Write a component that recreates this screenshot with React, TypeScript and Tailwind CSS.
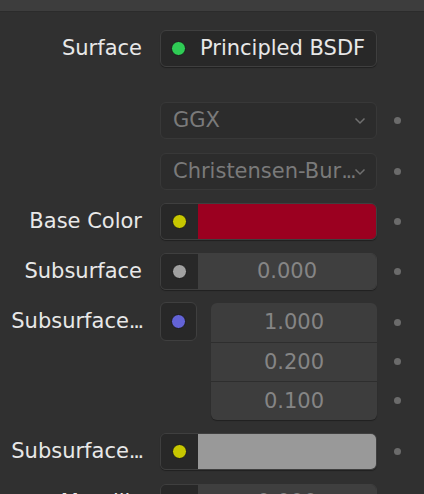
import React from 'react';

const font = { fontFamily: '"DejaVu Sans", "Liberation Sans", sans-serif' };

function Dot() {
  return <div className="ml-[17px] size-[7px] shrink-0 rounded-full bg-[#6b6b6b]" />;
}

function Socket({ color }: { color: string }) {
  return (
    <div className="flex w-[37px] shrink-0 items-center justify-center self-stretch bg-[#282828]">
      <div className={`size-[15px] rounded-full border border-[#1a1a1a] ${color}`} />
    </div>
  );
}

function Label({ text, cut }: { text: string; cut?: boolean }) {
  return (
    <div className="w-[142px] shrink-0 whitespace-nowrap text-right text-[21px] leading-none text-[#e8e8e8]">
      {text}
      {cut && <span className="tracking-[-2.3px]">...</span>}
    </div>
  );
}

function Chevron() {
  return (
    <svg width="12" height="8" viewBox="0 0 12 8" className="ml-auto mr-[2px] shrink-0">
      <path d="M1.5 1.5 L6 6 L10.5 1.5" fill="none" stroke="#707070" strokeWidth="1.5" />
    </svg>
  );
}

export default function App() {
  return (
    <div className="h-[494px] w-[424px] overflow-hidden bg-[#303030]" style={font}>
      {/* panel header, mostly scrolled away */}
      <div className="h-[12px] overflow-hidden border-b border-[#2b2b2b] bg-[#3d3d3d]">
        <div className="ml-[40px] mt-[-17px] text-[21px] font-bold leading-[20px] text-[#bdbdbd]">Surface</div>
      </div>

      {/* Surface */}
      <div className="mt-[18px] flex h-[37px] items-center">
        <Label text="Surface" />
        <div className="ml-[18px] flex h-full w-[217px] items-center rounded-[6px] border border-[#3f3f3f] bg-[#282828] shadow-[0_1px_1px_rgba(0,0,0,0.35)]">
          <div className="ml-[10px] size-[15px] rounded-full border border-[#1a1a1a] bg-[#2fcc55]" />
          <span className="ml-[14px] whitespace-nowrap text-[21px] leading-none text-[#e8e8e8]">Principled BSDF</span>
        </div>
      </div>

      {/* GGX */}
      <div className="mt-[35px] flex h-[37px] items-center">
        <div className="w-[142px] shrink-0" />
        <div className="ml-[18px] flex h-full w-[217px] items-center rounded-[6px] border border-[#383838] bg-[#2c2c2c] pl-[12px] pr-[8px]">
          <span className="text-[21px] leading-none text-[#7a7a7a]">GGX</span>
          <Chevron />
        </div>
        <Dot />
      </div>

      {/* Christensen-Burley */}
      <div className="mt-[14px] flex h-[37px] items-center">
        <div className="w-[142px] shrink-0" />
        <div className="ml-[18px] flex h-full w-[217px] items-center overflow-hidden rounded-[6px] border border-[#383838] bg-[#2c2c2c] pl-[12px] pr-[8px]">
          <span className="whitespace-nowrap text-[21px] leading-none text-[#7a7a7a]">
            Christensen-Bur<span className="tracking-[-2.3px]">...</span>
          </span>
          <Chevron />
        </div>
        <Dot />
      </div>

      {/* Base Color */}
      <div className="mt-[13px] flex h-[37px] items-center">
        <Label text="Base Color" />
        <div className="ml-[18px] flex h-full w-[217px] overflow-hidden rounded-[6px] border border-[#3f3f3f] shadow-[0_1px_1px_rgba(0,0,0,0.35)]">
          <Socket color="bg-[#c7c700]" />
          <div className="flex-1 bg-[#9b0020]" />
        </div>
        <Dot />
      </div>

      {/* Subsurface */}
      <div className="mt-[13px] flex h-[37px] items-center">
        <Label text="Subsurface" />
        <div className="ml-[18px] flex h-full w-[217px] overflow-hidden rounded-[6px] border border-[#3f3f3f] shadow-[0_1px_1px_rgba(0,0,0,0.35)]">
          <Socket color="bg-[#a1a1a1]" />
          <div className="flex flex-1 items-center justify-center bg-[#3f3f3f] text-[21px] leading-none text-[#858585]">0.000</div>
        </div>
        <Dot />
      </div>

      {/* Subsurface Radius (vector) */}
      <div className="mt-[12px] flex items-start">
        <div className="flex h-[39px] w-[142px] shrink-0 items-center justify-end">
          <Label text="Subsurface" cut />
        </div>
        <div className="ml-[18px] flex h-[39px] w-[37px] shrink-0 items-center justify-center rounded-[6px] border border-[#3f3f3f] bg-[#282828]">
          <div className="size-[15px] rounded-full border border-[#1a1a1a] bg-[#6363d6]" />
        </div>
        <div className="ml-[14px] mt-[1px] flex flex-col">
          {['1.000', '0.200', '0.100'].map((v, i) => (
            <div key={v} className="flex items-center">
              <div
                className={`flex h-[39px] w-[166px] items-center justify-center bg-[#3d3d3d] text-[21px] leading-none text-[#858585] ${
                  i === 0 ? 'rounded-t-[6px]' : 'border-t border-[#2e2e2e]'
                } ${i === 2 ? 'rounded-b-[6px] shadow-[0_1px_1px_rgba(0,0,0,0.35)]' : ''}`}
              >
                {v}
              </div>
              <Dot />
            </div>
          ))}
        </div>
      </div>

      {/* Subsurface Color */}
      <div className="mt-[13px] flex h-[37px] items-center">
        <Label text="Subsurface" cut />
        <div className="ml-[18px] flex h-full w-[217px] overflow-hidden rounded-[6px] border border-[#3f3f3f] shadow-[0_1px_1px_rgba(0,0,0,0.35)]">
          <Socket color="bg-[#c7c700]" />
          <div className="flex-1 bg-[#999999]" />
        </div>
        <Dot />
      </div>

      {/* Metallic */}
      <div className="mt-[14px] flex h-[37px] items-center">
        <Label text="Metallic" />
        <div className="ml-[18px] flex h-full w-[217px] overflow-hidden rounded-[6px] border border-[#3f3f3f]">
          <Socket color="bg-[#a1a1a1]" />
          <div className="flex flex-1 items-center justify-center bg-[#3f3f3f] text-[21px] leading-none text-[#858585]">0.000</div>
        </div>
        <Dot />
      </div>
    </div>
  );
}
